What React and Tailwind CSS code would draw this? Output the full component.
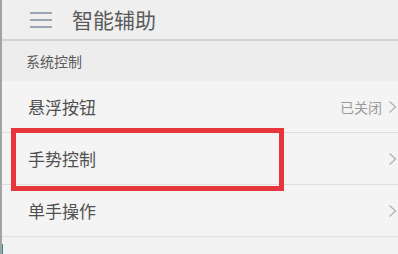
import React from "react";

const Chevron = () => (
  <svg width="9" height="14" viewBox="0 0 9 14" className="shrink-0">
    <path d="M1.5 1.5 L7.5 7 L1.5 12.5" fill="none" stroke="#b5b5b5" strokeWidth="1.4" />
  </svg>
);

const Row = ({ label, value, chevron = true }) => (
  <div className="h-[52px] flex items-center pl-[26px] pr-[1px] border-b border-[#dedede]">
    <span className="text-[17px] text-[#505050] leading-none flex-1">{label}</span>
    {value && <span className="text-[14px] text-[#9a9a9a] leading-none mr-[6px]">{value}</span>}
    {chevron && <Chevron />}
  </div>
);

export default function App() {
  return (
    <div
      className="relative w-[398px] h-[254px] overflow-hidden bg-[#f2f2f2] border-l-2 border-[#a0a4a6]"
      style={{ fontFamily: '"Noto Sans CJK SC", "Noto Sans", sans-serif' }}
    >
      <div className="h-[41px] flex items-center bg-[#efefef] border-b-2 border-[#d2d2d2]">
        <div className="ml-[28px] w-[22px] flex flex-col gap-[5px]">
          <div className="h-[2px] bg-[#9ba6b4]" />
          <div className="h-[2px] bg-[#9ba6b4]" />
          <div className="h-[2px] bg-[#9ba6b4]" />
        </div>
        <span className="ml-[20px] text-[21px] text-[#5a5a5a] leading-none">智能辅助</span>
      </div>
      <div className="h-[40px] flex items-center pl-[24px] bg-[#ededed]">
        <span className="text-[14px] text-[#5a5a5a] leading-none">系统控制</span>
      </div>
      <div className="bg-[#f4f4f4]">
        <Row label="悬浮按钮" value="已关闭" />
        <Row label="手势控制" />
        <Row label="单手操作" />
      </div>
      <div className="absolute left-[-2px] bottom-0 w-[3px] h-[10px] bg-[#3a8a8a]" />
      <div className="absolute left-[9px] top-[128px] w-[273px] h-[63px] border-[5px] border-[#e6363c]" />
    </div>
  );
}
